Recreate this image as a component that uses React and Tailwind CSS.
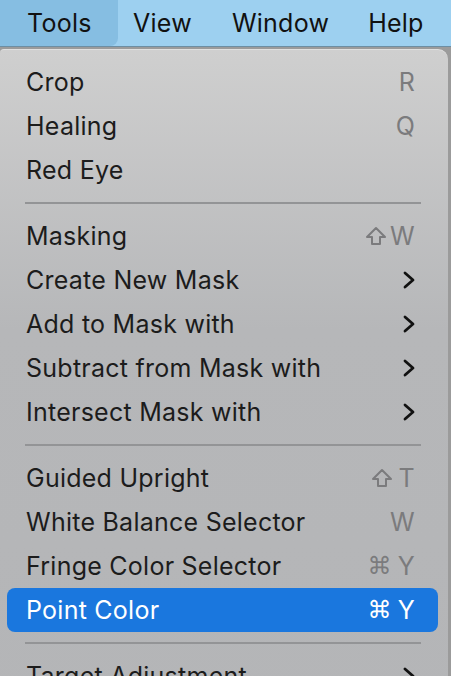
import React from "react";

const Shift = ({ className = "" }) => (
  <svg width="22" height="20" viewBox="0 0 22 20" className={className} fill="none" stroke="currentColor" strokeWidth="2" strokeLinejoin="round">
    <path d="M11 2 L20 11 L15 11 L15 18 L7 18 L7 11 L2 11 Z" />
  </svg>
);

const Chevron = () => (
  <svg width="12" height="20" viewBox="0 0 12 20" fill="none" stroke="#111" strokeWidth="2.8" strokeLinecap="round" strokeLinejoin="round">
    <path d="M2 3 L10 10 L2 17" />
  </svg>
);

const Row = ({ label, right, active }) => (
  <div
    className={
      "h-[44px] flex items-center justify-between pl-[19px] pr-[23px] rounded-[8px] " +
      (active ? "bg-[#1a77de] text-white" : "text-[#1c1c1c]")
    }
  >
    <span>{label}</span>
    <span className={"flex items-center gap-[6px] " + (active ? "text-white" : "text-[#7b7b7d]")}>{right}</span>
  </div>
);

const Sep = () => (
  <div className="h-[22px] flex items-center pl-[18px] pr-[17px]">
    <div className="h-[2px] w-full bg-[#939496]" />
  </div>
);

const Cmd = () => <span className="font-['DejaVu_Sans'] text-[24px]">⌘</span>;

export default function App() {
  return (
    <div className="w-[451px] h-[676px] overflow-hidden bg-[#9b9b9b] font-['Inter',sans-serif] text-[25px] tracking-[0.25px] leading-none">
      <div className="h-[47px] bg-[#9dd0f0] border-b border-[#6d8ea3] flex items-stretch text-[#111]">
        <div className="w-[118px] bg-[#86bee2] rounded-br-[8px] flex items-center pl-[27px]">Tools</div>
        <div className="flex items-center pl-[15px]">View</div>
        <div className="flex items-center pl-[40px]">Window</div>
        <div className="flex items-center pl-[39px]">Help</div>
      </div>
      <div className="mt-[2px] mr-[3px] h-[700px] rounded-tr-[10px] rounded-tl-[4px] bg-gradient-to-b from-[#cfcfcf] via-[#b6b7b9] via-[40%] to-[#b4b5b7] pl-[7px] pr-[10px] pt-[10px] border-t border-[#e0e0e0]">
        <Row label="Crop" right={<span>R</span>} />
        <Row label="Healing" right={<span>Q</span>} />
        <Row label="Red Eye" right={null} />
        <Sep />
        <Row label="Masking" right={<><Shift /><span className="-ml-[3px]">W</span></>} />
        <Row label="Create New Mask" right={<Chevron />} />
        <Row label="Add to Mask with" right={<Chevron />} />
        <Row label="Subtract from Mask with" right={<Chevron />} />
        <Row label="Intersect Mask with" right={<Chevron />} />
        <Sep />
        <Row label="Guided Upright" right={<><Shift /><span>T</span></>} />
        <Row label="White Balance Selector" right={<span>W</span>} />
        <Row label="Fringe Color Selector" right={<><Cmd /><span>Y</span></>} />
        <Row label="Point Color" right={<><Cmd /><span>Y</span></>} active />
        <Sep />
        <Row label="Target Adjustment" right={<Chevron />} />
      </div>
    </div>
  );
}
